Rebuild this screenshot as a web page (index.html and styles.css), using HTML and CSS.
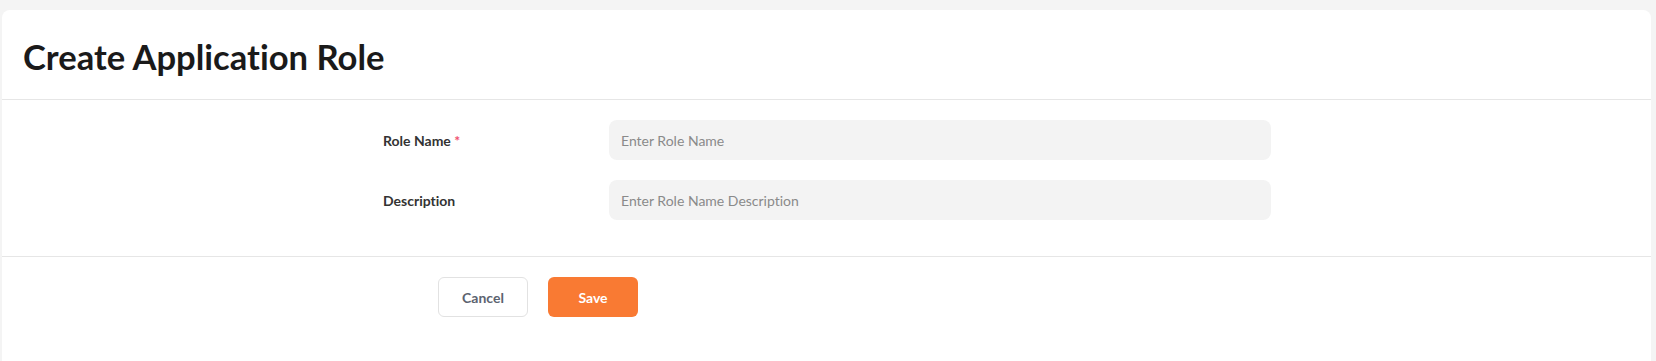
FILE: index.html
```html
<!DOCTYPE html>
<html lang="en">
<head>
<meta charset="utf-8">
<title>Create Application Role</title>
<link rel="stylesheet" href="styles.css">
</head>
<body>
<main class="card">
  <header class="card-header">
    <h1 class="title">Create Application Role</h1>
  </header>
  <section class="card-body">
    <div class="form-row">
      <label class="label" for="role-name">Role Name <span class="req">*</span></label>
      <input class="input" id="role-name" type="text" placeholder="Enter Role Name">
    </div>
    <div class="form-row">
      <label class="label" for="role-desc">Description</label>
      <input class="input" id="role-desc" type="text" placeholder="Enter Role Name Description">
    </div>
  </section>
  <footer class="card-footer">
    <button class="btn btn-cancel" type="button">Cancel</button>
    <button class="btn btn-save" type="button">Save</button>
  </footer>
</main>
</body>
</html>
```
FILE: styles.css
```css
* { box-sizing: border-box; }
html, body { height: 100%; }
body {
  margin: 0;
  background: #f4f4f4;
  padding: 10px 5px 0 2px;
  font-family: Lato, "Noto Sans", sans-serif;
  font-variant-ligatures: none;
  color: #333;
  overflow: hidden;
}
.card {
  background: #fff;
  border-radius: 8px 8px 0 0;
  min-height: 100%;
}
.card-header {
  padding: 27px 21px 22px;
  border-bottom: 1px solid #e6e6e6;
}
.title {
  margin: 0;
  font-size: 34.6px;
  line-height: 40px;
  font-weight: 700;
  color: #1a1a1a;
}
.card-body {
  padding: 20px 0 36px 381px;
  display: flex;
  flex-direction: column;
  gap: 20px;
  border-bottom: 1px solid #e6e6e6;
}
.form-row {
  display: grid;
  grid-template-columns: 226px 662px;
  align-items: center;
}
.label {
  font-size: 14px;
  font-weight: 700;
  color: #333;
}
.req { color: #f0506e; font-weight: 700; }
.input {
  height: 40px;
  border: none;
  border-radius: 8px;
  background: #f3f3f3;
  padding: 0 12px;
  font-family: Lato, "Noto Sans", sans-serif;
  font-variant-ligatures: none;
  font-size: 14px;
  color: #333;
  outline: none;
}
.input::placeholder { color: #8a8a8a; }
.card-footer {
  padding: 20px 0 0 436px;
  display: flex;
  gap: 20px;
}
.btn {
  width: 90px;
  height: 40px;
  border-radius: 6px;
  font-family: Lato, "Noto Sans", sans-serif;
  font-variant-ligatures: none;
  font-size: 14px;
  font-weight: 700;
  cursor: pointer;
}
.btn-cancel {
  background: #fff;
  border: 1px solid #e2e2e2;
  color: #5c6370;
}
.btn-save {
  background: #f97a33;
  border: none;
  color: #fff;
}
```
